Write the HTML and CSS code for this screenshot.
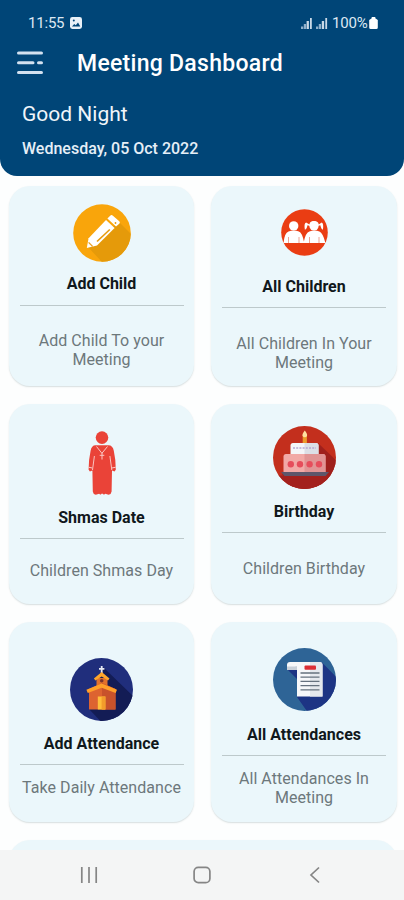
FILE: index.html
```html
<!DOCTYPE html>
<html lang="en">
<head>
<meta charset="utf-8">
<title>Meeting Dashboard</title>
<link rel="stylesheet" href="styles.css">
</head>
<body>
<div class="screen">
  <header class="header">
    <div class="status">
      <span class="clock">11:55</span>
      <svg class="status-photo" width="12" height="12" viewBox="0 0 12 12"><rect width="12" height="12" rx="2.4" fill="#e9f1f8"/><path d="M2 9.500 4.200 7l1.600 1.200L8 5.600l2.300 3.900z" fill="#004577"/><circle cx="3.800" cy="3.600" r="1" fill="#004577"/></svg>
      <svg class="status-signal" width="27" height="11" viewBox="0 0 27 11"><g fill="#8fb0cb"><rect x="0" y="8.500" width="2.300" height="2.500"/><rect x="2.800" y="6" width="2.300" height="5"/><rect x="15" y="8.500" width="2.300" height="2.500"/><rect x="17.800" y="6" width="2.300" height="5"/></g><g fill="#c9d9e7"><rect x="5.600" y="3" width="2.300" height="8"/><rect x="9" y="0" width="1.800" height="11"/><rect x="20.800" y="3" width="2.300" height="8"/><rect x="24.300" y="0" width="1.800" height="11"/></g></svg>
      <span class="charge">100%</span>
      <svg class="status-battery" width="9" height="12" viewBox="0 0 9 12"><path d="M2.700 0h3.600v1.200L8.800 3v7.500q0 1.500-1.500 1.500H1.700Q.2 12 .2 10.500V3l2.500-1.800z" fill="#fff"/></svg>
    </div>
    <div class="bar">
      <svg class="menu" width="26" height="24" viewBox="0 0 26 24"><g stroke="#d3e1f0" stroke-width="3" stroke-linecap="round"><path d="M1.500 2h23M1.500 11.700h14.500M21.500 11.700h3M1.500 21.500h23"/></g></svg>
      <h1 class="title">Meeting Dashboard</h1>
    </div>
    <p class="greeting">Good Night</p>
    <p class="date">Wednesday, 05 Oct 2022</p>
  </header>

  <main class="grid">
    <section class="card add-child">
      <svg class="icon" width="58" height="58" viewBox="0 0 58 58">
        <defs><clipPath id="c1"><circle cx="29" cy="29" r="28.800"/></clipPath></defs>
        <circle cx="29" cy="29" r="28.800" fill="#f9a50b"/>
        <path clip-path="url(#c1)" d="M15 43 46 18 70 42 42 72z" fill="#e59a0a"/>
        <path d="M13.800 44 15.600 34.300 33 16 41.600 24 24 41.500z" fill="#fff"/>
        <path d="M34.400 14.600 37.200 11.700q1.300-1.300 2.700 0l6.400 5.500q1.200 1.300 0 2.600L43 22.600z" fill="#fff"/>
        <path d="M24 37.500 36.800 25.500" stroke="#e69a0b" stroke-width="1.600"/>
        <path d="M15.600 38.300 19.600 42.500" stroke="#eaa022" stroke-width="1.200"/>
        <circle cx="42.500" cy="19" r=".9" fill="#e69a0b"/>
      </svg>
      <h2 class="name">Add Child</h2>
      <hr class="rule">
      <p class="desc">Add Child To your<br>Meeting</p>
    </section>

    <section class="card all-children">
      <svg class="icon" width="47" height="47" viewBox="0 0 47 47">
        <circle cx="23.500" cy="23.500" r="23.300" fill="#ea3d13"/>
        <g fill="#fff">
          <circle cx="12.700" cy="16.900" r="4.700"/>
          <path d="M2.500 34q1-10 5-11.400 2.500-1 5.200-1t5.200 1q3.200 1.200 5 10 1.800-8.800 5.500-10 2.200-1 5-1t5 1q3.500 1.400 6 11.400z"/>
          <circle cx="33" cy="16.900" r="4.600"/>
          <path d="M28.500 15.500q0-3.500 4.500-3.500t4.700 3.500l3-1.900q2.200.9 1.200 7.200-1.600-.5-2.600-4.500l-2.600.7H29l-2.500-.7q-.8 4-2.600 4.500-1.200-6.300 1.200-7.200z"/>
        </g>
        <path d="M7.500 34v-6M18 34v-6M28.500 34v-6M38 34v-6" stroke="#e98e78" stroke-width=".8"/>
      </svg>
      <h2 class="name">All Children</h2>
      <hr class="rule">
      <p class="desc">All Children In Your<br>Meeting</p>
    </section>

    <section class="card shmas">
      <svg class="icon" width="30" height="64" viewBox="0 0 30 64">
        <g fill="#ea4338">
          <circle cx="15" cy="6.600" r="6.300"/>
          <path d="M8.500 14.300h13q4.200 0 5.300 5.500 2 9 2 19l-1.300 1.600-2.500-.8L24.600 60.500q-.2 2.600-3 3.200l-3.300-.9-1 .7q-.9.300-1.300-.8h-1.600q-.4 1.100-1.300.8l-1-.7-3.300.9q-2.800-.6-3-3.200L5.400 39.600l-2.500.8-1.300-1.600q0-10 2-19 1-5.500 4.900-5.500z"/>
        </g>
        <path d="M7.400 25 5.500 39M22.900 25 24.800 39" stroke="#f9c4c0" stroke-width="1"/>
        <path d="M9.500 15.500 14.900 22.300 20.500 15.500M15 22v6.500M12.700 24.300h4.600M1.500 36.200l3.800.8M28.700 36.200l-3.800.8" fill="none" stroke="#fbc9c5" stroke-width="1"/>
      </svg>
      <h2 class="name">Shmas Date</h2>
      <hr class="rule">
      <p class="desc">Children Shmas Day</p>
    </section>

    <section class="card birthday">
      <svg class="icon" width="63" height="63" viewBox="0 0 63 63">
        <defs><clipPath id="c4"><circle cx="31.500" cy="31.500" r="31.500"/></clipPath></defs>
        <g clip-path="url(#c4)">
          <rect width="63" height="63" fill="#c32f1d"/>
          <path d="M45 17 68 39v30H22L9 48z" fill="#9f201c"/>
          <rect y="49.500" width="63" height="14" fill="#a3211d"/>
        </g>
        <rect x="29.700" y="9" width="4.200" height="9" fill="#ed9b2c"/>
        <path d="M31.800 4.500q3 3.500 2.200 5.500-.6 1.300-2.200 1.300T29.600 10q-.8-2 2.200-5.500z" fill="#ffe1a0"/>
        <path d="M17.500 29V19.500q0-2.500 2.500-2.500h23q2.500 0 2.500 2.500V29z" fill="#f4f5f8"/>
        <path d="M31.500 17H43q2.500 0 2.500 2.500V29h-14z" fill="#dcdfe6"/>
        <path d="M20 22h23" stroke="#b7a8d0" stroke-width="1.600" stroke-dasharray="2 1.200"/>
        <path d="M10.500 46.500v-16q0-2.500 2.500-2.500h37q2.500 0 2.500 2.500v16z" fill="#f2a9a6"/>
        <path d="M31.500 28H50q2.500 0 2.500 2.500v16h-21z" fill="#e19494"/>
        <g fill="#e64d5b"><circle cx="17.800" cy="38.300" r="3.200"/><circle cx="27" cy="38.300" r="3.200"/><circle cx="36.600" cy="38.300" r="3.200"/><circle cx="46" cy="38.300" r="3.200"/></g>
        <path d="M8 46h48l-3.500 4h-41z" fill="#5e566a"/>
      </svg>
      <h2 class="name">Birthday</h2>
      <hr class="rule">
      <p class="desc">Children Birthday</p>
    </section>

    <section class="card add-attendance">
      <svg class="icon" width="63" height="63" viewBox="0 0 63 63">
        <defs><clipPath id="c5"><circle cx="31.500" cy="31.500" r="31.500"/></clipPath></defs>
        <g clip-path="url(#c5)"><rect width="63" height="63" fill="#202e7c"/><path d="M33 9 66 41v28H36L19 51z" fill="#131c55"/></g>
        <path d="M31.700 8v9M29 10.800h5.400" stroke="#e7e9f2" stroke-width="1.800"/>
        <path d="M26.500 20h11v11h-11z" fill="#e2712c"/>
        <path d="M31.700 14 39.500 20.500 38 22.500 31.700 18.500 25.400 22.500 23.900 20.500z" fill="#ffa62b"/>
        <path d="M19 31 32 25l13.500 6v20.500H19z" fill="#dd6330"/>
        <path d="M32 25l13.500 6v20.500H32z" fill="#c8522b"/>
        <path d="M31.700 25.500 47 31.700 45.600 35 31.700 29.800 17.800 35 16.400 31.700z" fill="#ff9f2a"/>
        <circle cx="31.700" cy="22.800" r="1.800" fill="#7c342b"/>
        <rect x="27.800" y="38.500" width="7.600" height="13" fill="#ffbd3b"/><rect x="31.600" y="38.500" width="3.800" height="13" fill="#f39c2b"/>
      </svg>
      <h2 class="name">Add Attendance</h2>
      <hr class="rule">
      <p class="desc">Take Daily Attendance</p>
    </section>

    <section class="card all-attendances">
      <svg class="icon" width="63" height="63" viewBox="0 0 63 63">
        <defs><clipPath id="c6"><circle cx="31.500" cy="31.500" r="31.500"/></clipPath></defs>
        <g clip-path="url(#c6)"><rect width="63" height="63" fill="#2e6496"/><path d="M14 21 24 14.500H49L70 36v33H38L24 49V31z" fill="#1d3484"/></g>
        <path d="M17 14h29.500q3 0 3 3v31.500H24V22H14v-5q0-3 3-3z" fill="#f7f8fa"/>
        <path d="M37 14h9.500q3 0 3 3v31.500H37z" fill="#e5e8ed"/>
        <path d="M14 22v-3.500h8q1.500-1 2 0V22z" fill="#c9d0d9"/>
        <rect x="31.500" y="17.500" width="11.500" height="4.200" rx="1" fill="#dc2e35"/>
        <path d="M27.500 25h19M27.500 29.200h19M27.500 33.400h19M27.500 37.600h19M27.500 41.800h19" stroke="#66717e" stroke-width="1.300"/>
      </svg>
      <h2 class="name">All Attendances</h2>
      <hr class="rule">
      <p class="desc">All Attendances In<br>Meeting</p>
    </section>

    <section class="card wide"></section>
  </main>

  <nav class="nav">
    <svg width="18" height="18" viewBox="0 0 18 18"><path d="M1.800 1v16M9 1v16M16.200 1v16" stroke="#858585" stroke-width="1.700"/></svg>
    <svg width="18" height="18" viewBox="0 0 18 18"><rect x="1.100" y="1.300" width="15.800" height="15.400" rx="4.200" fill="none" stroke="#858585" stroke-width="1.700"/></svg>
    <svg width="18" height="18" viewBox="0 0 18 18"><path d="M13 1.500 5 9l8 7.500" fill="none" stroke="#858585" stroke-width="1.700"/></svg>
  </nav>
</div>
</body>
</html>
```
FILE: styles.css
```css
* { box-sizing: border-box; }
body { margin: 0; background: #fdfefe; font-family: Roboto, "Liberation Sans", sans-serif; }
h1, h2, p { margin: 0; white-space: nowrap; }
svg { display: block; flex: none; }

.screen { width: 404px; height: 900px; display: flex; flex-direction: column; overflow: hidden; }

.header { flex: none; height: 176px; padding-top: 13px; background: #004577; border-radius: 0 0 17px 17px; color: #fff; }
.status { display: flex; align-items: center; height: 20px; padding-left: 28px; font-size: 15px; line-height: 20px; color: #dce8f3; }
.clock { width: 42px; letter-spacing: -0.2px; }
.status-signal { margin-left: 219px; }
.charge { margin-left: 4px; width: 37px; letter-spacing: -0.2px; }
.bar { display: flex; align-items: center; height: 32px; margin-top: 14px; padding-left: 17px; }
.title { margin: 2px 0 0 34px; font-size: 23px; font-weight: 500; line-height: 32px; letter-spacing: 0.28px; }
.greeting { margin: 21px 0 0 22px; font-size: 21px; line-height: 28px; color: #f0f5fa; }
.date { margin: 11px 0 0 22px; font-size: 16px; font-weight: 500; line-height: 20px; color: #e6eff7; }

.grid { flex: 1; min-height: 0; display: grid; grid-template-columns: 185px 186px; grid-template-rows: 200px 200px 200px 60px; gap: 18px 17px; padding: 10px 7px 0 9px; overflow: hidden; }
.card { display: flex; flex-direction: column; align-items: center; background: #ebf7fb; border-radius: 21px; box-shadow: 0 1px 1.5px rgba(80, 110, 115, .22); }
.name { font-size: 16px; font-weight: 700; line-height: 20px; color: #10181c; }
.rule { width: 164px; height: 1px; margin: 0; border: 0; background: #bdc9cb; flex: none; }
.desc { text-align: center; font-size: 16px; line-height: 19px; letter-spacing: 0.05px; color: #6d787b; }
.wide { grid-column: 1 / 3; }

.add-child { padding-top: 18px; }
.add-child .name { margin-top: 12px; }
.add-child .rule { margin-top: 11px; }
.add-child .desc { margin-top: 25px; }
.all-children { padding-top: 23px; }
.all-children .name { margin-top: 21px; }
.all-children .rule { margin-top: 10px; }
.all-children .desc { margin-top: 26px; }
.shmas { padding-top: 27px; }
.shmas .name { margin-top: 13px; }
.shmas .rule { margin-top: 10px; }
.shmas .desc { margin-top: 22px; }
.birthday { padding-top: 22px; }
.birthday .name { margin-top: 13px; }
.birthday .rule { margin-top: 10px; }
.birthday .desc { margin-top: 26px; }
.add-attendance { padding-top: 36px; }
.add-attendance .name { margin-top: 13px; }
.add-attendance .rule { margin-top: 10px; }
.add-attendance .desc { margin-top: 13px; }
.all-attendances { padding-top: 26px; }
.all-attendances .name { margin-top: 14px; }
.all-attendances .rule { margin-top: 10px; }
.all-attendances .desc { margin-top: 13px; }

.nav { flex: none; display: flex; justify-content: space-between; align-items: center; height: 50px; padding: 0 80px; background: #f4f5f5; }
```
